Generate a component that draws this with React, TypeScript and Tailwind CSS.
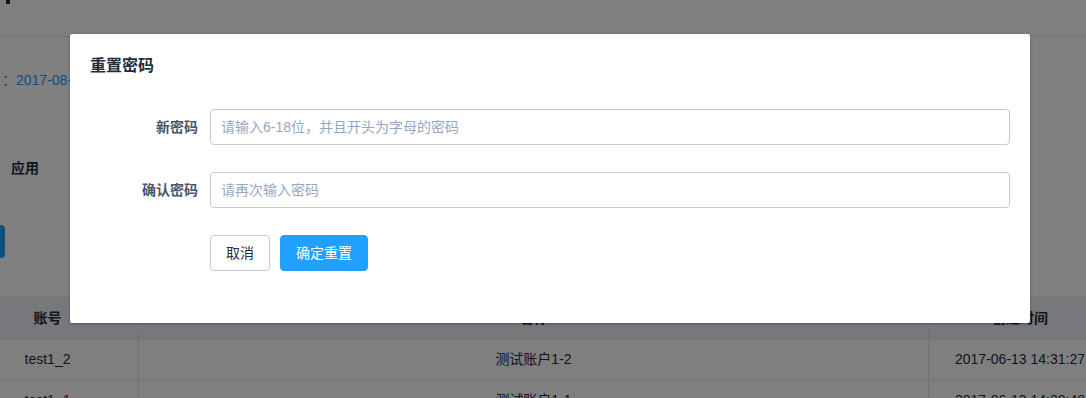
import React from "react";

const font = { fontFamily: '"Liberation Sans", "Noto Sans CJK SC", sans-serif' };

export default function App() {
  return (
    <div className="relative w-[1086px] h-[398px] overflow-hidden bg-white text-[14px] text-[#1f2d3d]" style={font}>
      {/* background page */}
      <div className="flex flex-col">
        <div className="h-[37px] border-b border-[#dfe6ec] flex items-start">
          <div className="ml-[6px] w-[4px] h-[4px] bg-[#1f2d3d]" />
        </div>
        <div className="mt-[33px] h-[20px] flex items-center text-[#20a0ff] text-[14px]">
          <span className="ml-[2px]">：2017-08-01 10:21:36</span>
        </div>
        <div className="mt-[68px] h-[20px] flex items-center pl-[11px] font-bold text-[14px]">应用</div>
        <div className="mt-[47px] w-[5px] h-[33px] bg-[#20a0ff] rounded-r-[4px]" />
        <div className="mt-[39px] flex flex-col w-[1110px]">
          <div className="flex h-[42px] bg-[#eef1f6] border-y border-[#dfe6ec] font-bold">
            <div className="w-[139px] shrink-0 pr-[43px] flex items-center justify-center border-r border-[#dfe6ec]">账号</div>
            <div className="w-[790px] shrink-0 flex items-center justify-center border-r border-[#dfe6ec]">名称</div>
            <div className="w-[182px] shrink-0 flex items-center justify-center">创建时间</div>
          </div>
          {[
            ["test1_2", "测试账户1-2", "2017-06-13 14:31:27"],
            ["test1_1", "测试账户1-1", "2017-06-13 14:30:48"],
          ].map((r) => (
            <div key={r[0]} className="flex h-[41px] border-b border-[#dfe6ec] text-[14px]">
              <div className="w-[139px] shrink-0 pr-[43px] flex items-center justify-center border-r border-[#dfe6ec]">{r[0]}</div>
              <div className="w-[790px] shrink-0 flex items-center justify-center border-r border-[#dfe6ec]">{r[1]}</div>
              <div className="w-[182px] shrink-0 flex items-center justify-center whitespace-nowrap">{r[2]}</div>
            </div>
          ))}
        </div>
      </div>

      {/* overlay */}
      <div className="absolute inset-0 bg-black/50" />

      {/* dialog */}
      <div className="absolute left-[70px] top-[34px] w-[960px] bg-white rounded-[2px] shadow-[0_1px_3px_rgba(0,0,0,0.3)] flex flex-col px-[20px] pt-[20px] pb-[52px]">
        <div className="leading-[24px] text-[16px] font-bold text-[#1f2d3d]">重置密码</div>
        <div className="mt-[31px] flex flex-col gap-[27px]">
          <div className="flex items-center">
            <label className="w-[120px] pr-[12px] text-right font-bold text-[#48576a] leading-[36px]">新密码</label>
            <input
              className="flex-1 h-[36px] border border-[#bfcbd9] rounded-[4px] px-[10px] text-[14px] outline-none placeholder:text-[#97a8be]"
              placeholder="请输入6-18位，并且开头为字母的密码"
              style={font}
            />
          </div>
          <div className="flex items-center">
            <label className="w-[120px] pr-[12px] text-right font-bold text-[#48576a] leading-[36px]">确认密码</label>
            <input
              className="flex-1 h-[36px] border border-[#bfcbd9] rounded-[4px] px-[10px] text-[14px] outline-none placeholder:text-[#97a8be]"
              placeholder="请再次输入密码"
              style={font}
            />
          </div>
          <div className="flex items-center pl-[120px] gap-[10px]">
            <button className="h-[36px] px-[15px] border border-[#bfcbd9] rounded-[4px] bg-white text-[#1f2d3d] text-[14px]">取消</button>
            <button className="h-[36px] px-[15px] border border-[#20a0ff] rounded-[4px] bg-[#20a0ff] text-white text-[14px]">确定重置</button>
          </div>
        </div>
      </div>
    </div>
  );
}
